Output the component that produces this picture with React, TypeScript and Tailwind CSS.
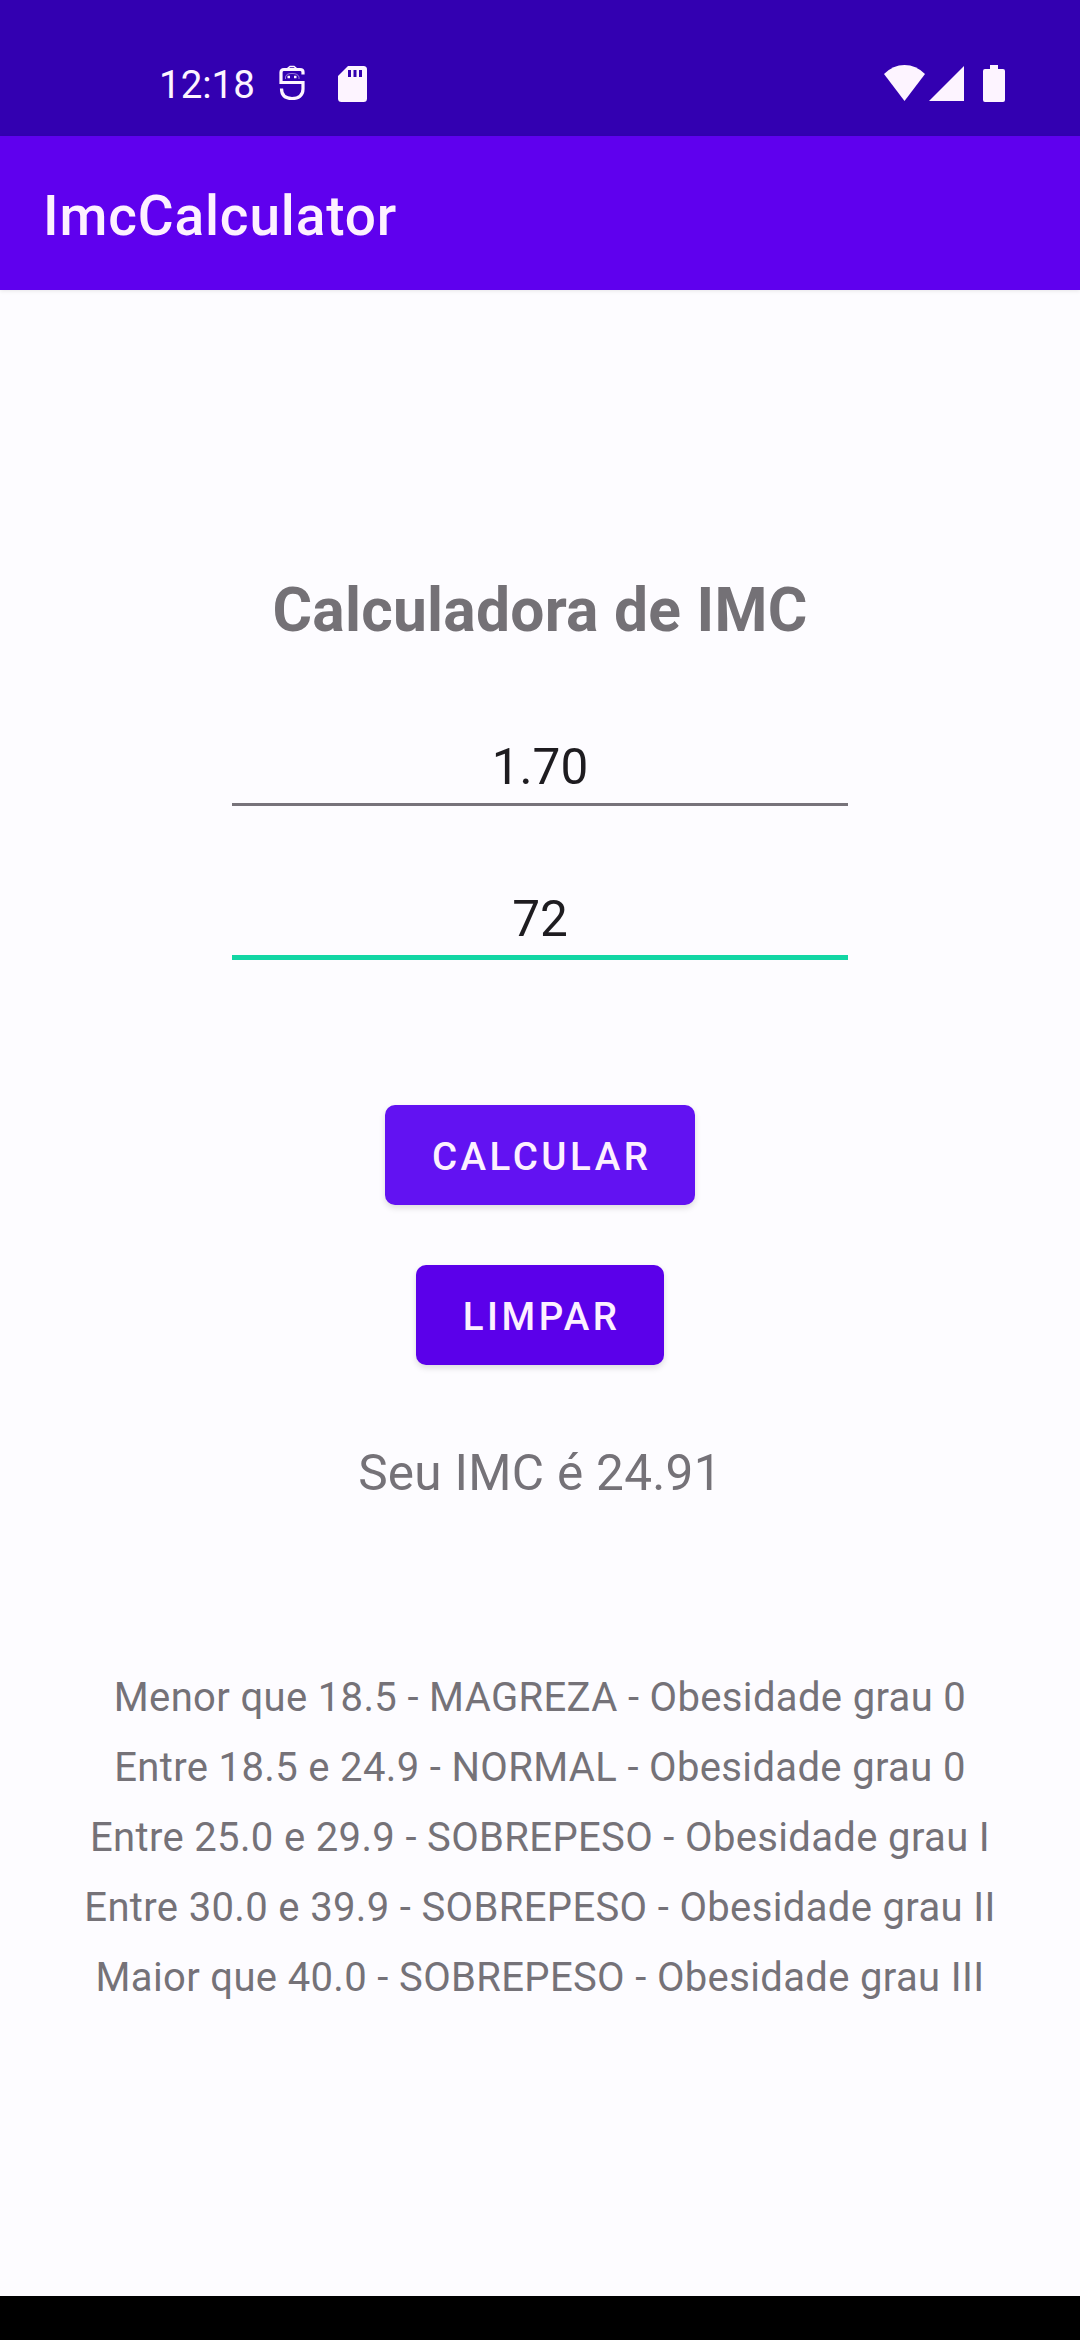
import React from "react";

const ranges = [
  "Menor que 18.5 - MAGREZA - Obesidade grau 0",
  "Entre 18.5 e 24.9 - NORMAL - Obesidade grau 0",
  "Entre 25.0 e 29.9 - SOBREPESO - Obesidade grau I",
  "Entre 30.0 e 39.9 - SOBREPESO - Obesidade grau II",
  "Maior que 40.0 - SOBREPESO - Obesidade grau III",
];

function StatusBar() {
  return (
    <div className="flex h-[136px] shrink-0 items-start bg-[#3300b1] pt-[63px] pl-[159px] pr-[75px] text-[#fdf4ff]">
      <span className="w-[96px] text-[38.5px] leading-[44px]">12:18</span>
      <svg className="mt-[2px] ml-[23px] h-[37px] w-[28px]" viewBox="0 0 28 37" fill="none" stroke="currentColor" strokeWidth="3.2">
        <path d="M25 9.500V7Q25 4.500 22 4.500H6Q3 4.500 3 7.500V17.500H25V24C25 30.500 20.500 33.500 14 33.500S3.500 30.500 3.500 23.500" />
        <path d="M9.500 3.500L12 1.500H16L18.500 3.500" strokeWidth="1.600" />
        <path d="M7.500 14V12Q8 8.500 14 8.500T21 12V14" strokeWidth="1" opacity="0.5" />
        <path d="M9.500 12h2.500M16 12h2.500" strokeWidth="2.600" />
      </svg>
      <svg className="mt-[3px] ml-[32px] h-[36px] w-[29px]" viewBox="0 0 29 36">
        <path d="M10 0H25.500Q29 0 29 3.500V32.500Q29 36 25.500 36H3.500Q0 36 0 32.500V10Z" fill="currentColor" />
        <path d="M11.500 4v7M17 4v7M22.500 4v7" stroke="#3300b1" strokeWidth="3" />
      </svg>
      <div className="flex-1" />
      <svg className="mt-[2px] h-[36px] w-[41px]" viewBox="0 0 41 36" fill="currentColor">
        <path d="M0 9Q9 0 20.500 0T41 9L20.500 36Z" />
      </svg>
      <svg className="mt-[3px] ml-[4px] h-[35px] w-[35px]" viewBox="0 0 35 35" fill="currentColor">
        <path d="M35 0V35H0Z" />
      </svg>
      <svg className="mt-[2px] ml-[19px] h-[37px] w-[22px]" viewBox="0 0 22 37" fill="currentColor">
        <path d="M7 0H15V4H20Q22 4 22 6V35Q22 37 20 37H2Q0 37 0 35V6Q0 4 2 4H7Z" />
      </svg>
    </div>
  );
}

export default function App() {
  return (
    <div className="flex h-[2340px] w-[1080px] flex-col overflow-hidden bg-[#fdfcff] font-['Roboto',sans-serif]">
      <StatusBar />
      <header className="flex h-[154px] shrink-0 items-center bg-[#5f00ee] pt-[6px] pl-[43px] text-[55px] leading-[64px] font-medium tracking-[0.85px] text-[#fdf0ff] shadow-[0_1px_4px_#00000018]">
        ImcCalculator
      </header>
      <main className="flex flex-1 flex-col items-center pt-[285px]">
        <h1 className="h-[72px] text-[60.5px] leading-[72px] font-bold tracking-[0.25px] text-[#747176]">Calculadora de IMC</h1>
        <div className="mt-[84px] flex h-[75px] w-[616px] items-start justify-center border-b-[3px] border-[#77737a] text-[49.5px] leading-[72px] text-[#1e1c20]">
          1.70
        </div>
        <div className="mt-[77px] flex h-[77px] w-[616px] items-start justify-center border-b-[5px] border-[#12d6a4] text-[49.5px] leading-[72px] text-[#1e1c20]">
          72
        </div>
        <button className="mt-[145px] flex h-[100px] w-[310px] items-center justify-center rounded-[10px] bg-[#6212f2] pt-[3px] pl-[3.4px] text-[38.5px] leading-[46px] font-medium tracking-[3.5px] text-[#fdf0ff] shadow-[0_3px_6px_#00000022]">
          CALCULAR
        </button>
        <button className="mt-[60px] flex h-[100px] w-[248px] items-center justify-center rounded-[10px] bg-[#5b00ea] pt-[3px] pl-[3.4px] text-[38.5px] leading-[46px] font-medium tracking-[3.5px] text-[#fdf0ff] shadow-[0_3px_6px_#00000022]">
          LIMPAR
        </button>
        <p className="mt-[72px] h-[72px] text-[49.5px] leading-[72px] tracking-[0.3px] text-[#757278]">Seu IMC é 24.91</p>
        <ul className="mt-[154px] text-center text-[40px] leading-[70px] tracking-[0.35px] text-[#757278]">
          {ranges.map((range) => (
            <li key={range}>{range}</li>
          ))}
        </ul>
      </main>
      <nav className="h-[44px] shrink-0 bg-black" />
    </div>
  );
}
